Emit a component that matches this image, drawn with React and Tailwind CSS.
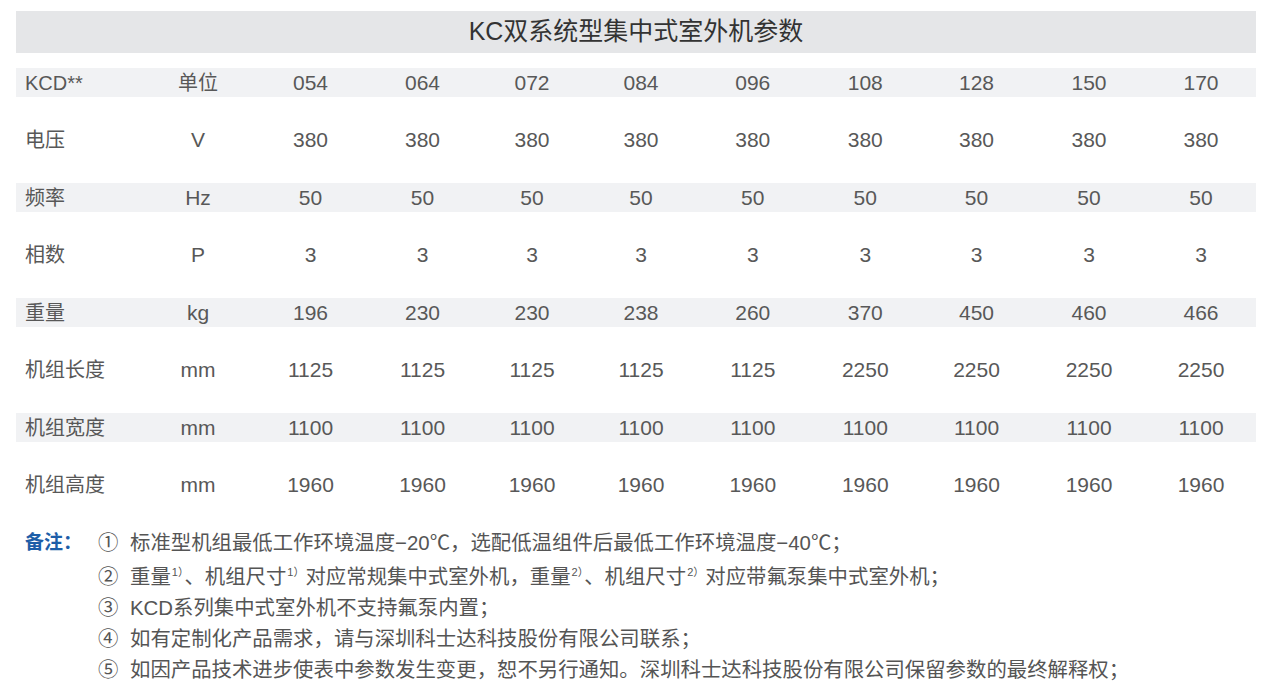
import React from "react";

const FONT = { fontFamily: '"Liberation Sans", Arial, "Noto Sans CJK SC", sans-serif' };

// column widths measured from the reference (total 1240)
const colWidths = [
  "w-[126px]",
  "w-[112px]",
  "w-[113px]",
  "w-[111px]",
  "w-[108px]",
  "w-[110px]",
  "w-[113.5px]",
  "w-[111.5px]",
  "w-[111px]",
  "w-[114px]",
  "w-[110px]",
];

const rows = [
  ["KCD**", "单位", "054", "064", "072", "084", "096", "108", "128", "150", "170"],
  ["电压", "V", "380", "380", "380", "380", "380", "380", "380", "380", "380"],
  ["频率", "Hz", "50", "50", "50", "50", "50", "50", "50", "50", "50"],
  ["相数", "P", "3", "3", "3", "3", "3", "3", "3", "3", "3"],
  ["重量", "kg", "196", "230", "230", "238", "260", "370", "450", "460", "466"],
  ["机组长度", "mm", "1125", "1125", "1125", "1125", "1125", "2250", "2250", "2250", "2250"],
  ["机组宽度", "mm", "1100", "1100", "1100", "1100", "1100", "1100", "1100", "1100", "1100"],
  ["机组高度", "mm", "1960", "1960", "1960", "1960", "1960", "1960", "1960", "1960", "1960"],
];

const Sup = ({ children }) => (
  <span className="text-[11px] relative -top-[8px] mx-[1px]">{children}</span>
);

const notes = [
  { n: "①", body: "标准型机组最低工作环境温度−20℃，选配低温组件后最低工作环境温度−40℃；", h: "h-[31px]" },
  {
    n: "②",
    body: (
      <>
        重量<Sup>1）</Sup>、机组尺寸<Sup>1）</Sup>对应常规集中式室外机，重量<Sup>2）</Sup>、机组尺寸<Sup>2）</Sup>对应带氟泵集中式室外机；
      </>
    ),
    h: "h-[31px] mt-[3px]",
  },
  { n: "③", body: "KCD系列集中式室外机不支持氟泵内置；", h: "h-[31px]" },
  { n: "④", body: "如有定制化产品需求，请与深圳科士达科技股份有限公司联系；", h: "h-[31px]" },
  { n: "⑤", body: "如因产品技术进步使表中参数发生变更，恕不另行通知。深圳科士达科技股份有限公司保留参数的最终解释权；", h: "h-[31px]" },
];

export default function App() {
  return (
    <div className="w-[1275px] h-[682px] bg-white overflow-hidden pt-[11px] px-[16px]" style={FONT}>
      {/* Title */}
      <div className="w-[1240px] h-[42px] bg-[#e5e6e8] flex items-center justify-center text-[25px] text-[#333333]">
        KC双系统型集中式室外机参数
      </div>

      {/* Table */}
      <div className="mt-[15px] w-[1240px]">
        {rows.map((row, i) => (
          <div
            key={i}
            className={`flex items-center text-[#585858] ${
              i % 2 === 0 ? "h-[29px] bg-[#f1f2f4]" : "h-[86px]"
            }`}
          >
            {row.map((cell, j) => (
              <div
                key={j}
                className={`${colWidths[j]} shrink-0 ${
                  j === 0 ? "pl-[9px] text-left text-[20px]" : "text-center"
                } ${j > 0 && i === 0 && j === 1 ? "text-[20px]" : j > 0 ? "text-[21px]" : ""}`}
              >
                {cell}
              </div>
            ))}
          </div>
        ))}
      </div>

      {/* Notes */}
      <div className="flex flex-col text-[20.4px] text-[#555555]">
        {notes.map((note, i) => (
          <div key={i} className={`flex items-center ${note.h}`}>
            <div className="w-[82px] shrink-0 pl-[9px] font-bold text-[#1d5ea8] text-[19px]">
              {i === 0 ? "备注：" : ""}
            </div>
            <div className="w-[32px] shrink-0">{note.n}</div>
            <div className="whitespace-nowrap">{note.body}</div>
          </div>
        ))}
      </div>
    </div>
  );
}
